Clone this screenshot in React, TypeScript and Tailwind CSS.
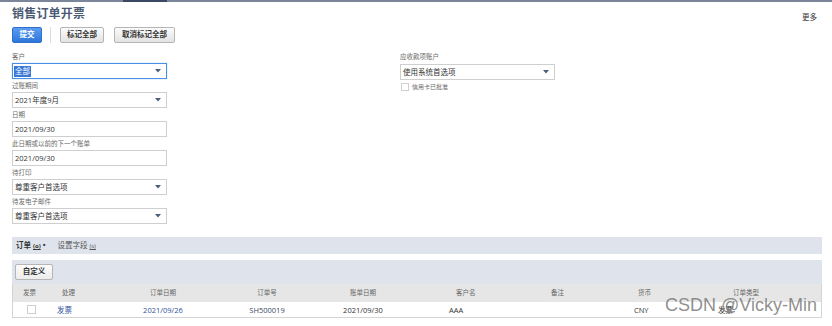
import React from "react";

const FONT = "font-['Open_Sans','Noto_Sans_CJK_SC',sans-serif]";

function Arrow() {
  return (
    <svg width="6" height="4" viewBox="0 0 6 4" className="shrink-0">
      <path d="M0 0 H6 L3 3.5 Z" fill="#4b5e7a" />
    </svg>
  );
}

function Label({ text }: { text: string }) {
  return (
    <div className="h-[13px] flex items-end pb-[2px] text-[6.5px] leading-[8px] text-[#6a6a6a]">{text}</div>
  );
}

function Select({ value, focused = false, w = 155 }: { value: string; focused?: boolean; w?: number }) {
  return (
    <div
      className={
        "h-[16px] flex items-center justify-between pl-[1px] pr-[5px] bg-white border " +
        (focused ? "border-[#4a8ee6] shadow-[0_0_1px_#8ab6f0]" : "border-[#cfcfcf]")
      }
      style={{ width: w }}
    >
      {focused ? (
        <span className="bg-[#3a78d6] text-white text-[7.5px] leading-[11px] px-[1px]">{value}</span>
      ) : (
        <span className="text-[#333] text-[7.5px] leading-[11px] pl-[1px]">{value}</span>
      )}
      <Arrow />
    </div>
  );
}

function Input({ value }: { value: string }) {
  return (
    <div className="w-[155px] h-[16px] flex items-center pl-[2px] bg-white border border-[#cfcfcf] text-[#333] text-[7.5px] leading-[11px]">
      {value}
    </div>
  );
}

export default function App() {
  return (
    <div className={"relative w-[832px] h-[326px] overflow-hidden bg-white " + FONT}>
      {/* top bar */}
      <div className="h-[2px] bg-[#7b869b] flex">
        <div className="ml-[123px] w-[44px] bg-[#3b4863]" />
      </div>

      {/* title row */}
      <div className="flex justify-between pl-[12px] pr-[15px] mt-[4px] h-[16px]">
        <div className="text-[12px] leading-[16px] font-semibold text-[#4a5a73] tracking-[0.2px]">销售订单开票</div>
        <div className="text-[7.5px] leading-[10px] text-[#333] mt-[6px]">更多</div>
      </div>

      {/* buttons */}
      <div className="flex items-center pl-[12px] mt-[5px] h-[16px]">
        <div className="w-[30px] h-[16px] rounded-[2px] border border-[#2f6fcf] bg-[linear-gradient(#5a9cf0,#2f76d8)] text-white font-bold text-[7.5px] flex items-center justify-center">
          提交
        </div>
        <div className="w-px h-[16px] bg-[#dcdcdc] mx-[8px]" />
        <div className="w-[44px] h-[16px] ml-[1px] rounded-[2px] border border-[#b5b5b5] bg-[linear-gradient(#fbfbfb,#e3e3e3)] text-[#333] font-bold text-[7.5px] flex items-center justify-center">
          标记全部
        </div>
        <div className="w-[61px] h-[16px] ml-[10px] rounded-[2px] border border-[#b5b5b5] bg-[linear-gradient(#fbfbfb,#e3e3e3)] text-[#333] font-bold text-[7.5px] flex items-center justify-center">
          取消标记全部
        </div>
      </div>

      {/* form */}
      <div className="flex mt-[7px] pl-[12px]">
        <div className="w-[388px] flex flex-col">
          <Label text="客户" />
          <Select value="全部" focused />
          <Label text="过账期间" />
          <Select value="2021年度9月" />
          <Label text="日期" />
          <Input value="2021/09/30" />
          <Label text="此日期或以前的下一个账单" />
          <Input value="2021/09/30" />
          <Label text="待打印" />
          <Select value="尊重客户首选项" />
          <Label text="待发电子邮件" />
          <Select value="尊重客户首选项" />
        </div>
        <div className="flex flex-col">
          <Label text="应收款项账户" />
          <div className="mt-[1px]">
            <Select value="使用系统首选项" />
          </div>
          <div className="flex items-center mt-[3px] ml-[1px]">
            <div className="w-[8px] h-[8px] border border-[#cfcfcf] bg-white" />
            <span className="ml-[3px] text-[6px] leading-[8px] text-[#6a6a6a]">信用卡已批准</span>
          </div>
        </div>
      </div>

      {/* tabbed panel */}
      <div className="mt-[13px] ml-[12px] w-[810px]">
        <div className="h-[17px] bg-[#dfe4ec] flex items-center pl-[4px] text-[7.5px] leading-[10px]">
          <span className="font-bold text-[#333]">
            订单 <span className="text-[6px] underline">(o)</span> •
          </span>
          <span className="ml-[12px] text-[#555]">
            设置字段 <span className="text-[6px] underline">(s)</span>
          </span>
        </div>
        <div className="h-[6px] bg-white" />
        <div className="h-[24px] bg-[#dfe4ec] flex items-center pl-[3px]">
          <div className="w-[38px] h-[16px] rounded-[2px] border border-[#b5b5b5] bg-[linear-gradient(#fbfbfb,#ececec)] text-[#333] font-bold text-[7.5px] flex items-center justify-center">
            自定义
          </div>
        </div>
        {/* header row */}
        <div className="h-[18px] bg-[#e6e6e6] border-x border-[#d4d4d4] flex items-center text-[6.5px] leading-[8px] text-[#666]">
          <div className="w-[40px] pl-[10px]">发票</div>
          <div className="w-[70px] pl-[9px]">处理</div>
          <div className="w-[80px] text-center">订单日期</div>
          <div className="w-[128px] text-center">订单号</div>
          <div className="w-[64px] text-center">账单日期</div>
          <div className="w-[146px] pl-[61px]">客户名</div>
          <div className="w-[60px] pl-[10px]">备注</div>
          <div className="w-[90px] pl-[37px]">货币</div>
          <div className="w-[130px] pl-[42px]">订单类型</div>
        </div>
        {/* data row */}
        <div className="h-[16px] bg-white border-x border-b border-[#d4d4d4] flex items-center text-[7.5px] leading-[10px] text-[#333]">
          <div className="w-[40px] pl-[14px]">
            <div className="w-[9px] h-[9px] border border-[#cfcfcf] bg-white" />
          </div>
          <div className="w-[70px] pl-[4px] text-[#2f4f9c]">发票</div>
          <div className="w-[80px] text-center text-[#2f4f9c]">2021/09/26</div>
          <div className="w-[128px] text-center text-[#3a4a66]">SH500019</div>
          <div className="w-[64px] text-center">2021/09/30</div>
          <div className="w-[146px] pl-[54px]">AAA</div>
          <div className="w-[60px]" />
          <div className="w-[90px] pl-[33px]">CNY</div>
          <div className="w-[130px] pl-[27px]">发票</div>
        </div>
      </div>

      {/* watermark */}
      <div className="absolute left-[665px] top-[296px] text-[18px] leading-[18px] font-['Liberation_Sans',sans-serif] text-[rgba(115,115,115,0.8)] whitespace-nowrap">
        CSDN @Vicky-Min
      </div>
    </div>
  );
}
